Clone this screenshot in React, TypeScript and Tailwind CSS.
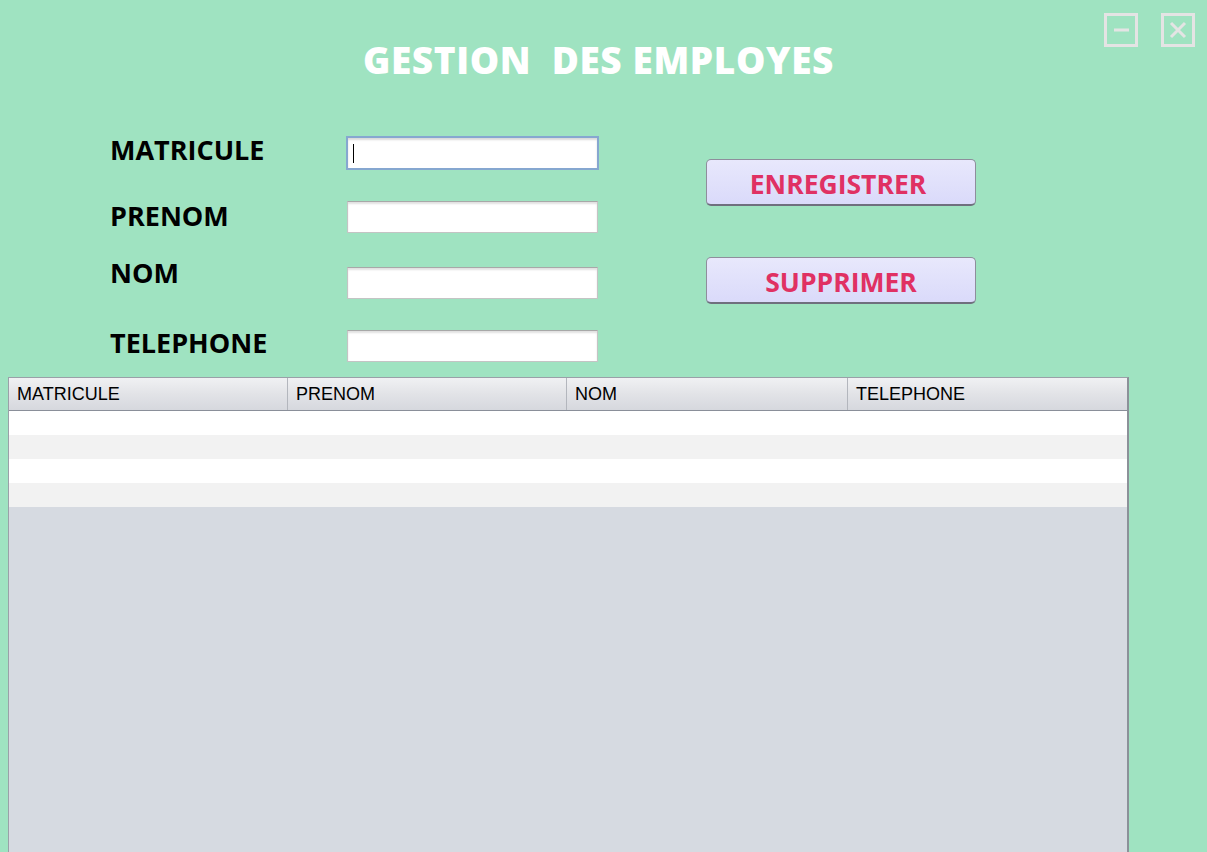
import React from "react";

const fields = ["MATRICULE", "PRENOM", "NOM", "TELEPHONE"];
const columns = [
  { label: "MATRICULE", width: "w-[279px]" },
  { label: "PRENOM", width: "w-[279px]" },
  { label: "NOM", width: "w-[281px]" },
  { label: "TELEPHONE", width: "flex-1" },
];

const WindowButton = ({ kind }: { kind: "min" | "close" }) => (
  <div className="w-[34px] h-[34px] border-[3px] border-[#e4e4e4] flex items-center justify-center">
    <svg width="18" height="18" viewBox="0 0 18 18">
      {kind === "min" ? (
        <line x1="2" y1="9" x2="17" y2="9" stroke="#e4e4e4" strokeWidth="3" />
      ) : (
        <path d="M2 2 L16 16 M16 2 L2 16" stroke="#e4e4e4" strokeWidth="3" />
      )}
    </svg>
  </div>
);

const TextBox = ({ focused, className }: { focused?: boolean; className?: string }) => (
  <div
    className={`w-[251px] h-[32px] bg-white flex items-center ${
      focused
        ? "border-2 border-[#86a7d0] shadow-[inset_0_2px_2px_rgba(0,0,0,0.15)]"
        : "border border-[#c4c4c4] border-t-[#a8a8a8] shadow-[inset_0_2px_2px_rgba(0,0,0,0.12)]"
    } ${className ?? ""}`}
  >
    {focused && <span className="ml-[5px] w-px h-[19px] bg-black" />}
  </div>
);

const ActionButton = ({ label, className }: { label: string; className?: string }) => (
  <button
    className={`w-[270px] h-[47px] rounded-[5px] border border-[#8e8e9c] border-b-2 border-b-[#6f6f7e] bg-gradient-to-b from-[#e8e8fc] to-[#dadafa] text-[#e03163] text-[26.5px] font-bold leading-none flex items-center justify-center pt-[4px] ${className ?? ""}`}
    style={{ fontFamily: '"Open Sans", sans-serif' }}
  >
    {label}
  </button>
);

export default function App() {
  return (
    <div
      className="relative w-[1207px] h-[852px] bg-[#9fe3c1] flex flex-col overflow-hidden"
      style={{ fontFamily: '"Open Sans", sans-serif' }}
    >
      {/* window controls */}
      <div className="absolute top-[13px] right-[12px] flex gap-[23px]">
        <WindowButton kind="min" />
        <WindowButton kind="close" />
      </div>

      {/* title */}
      <h1 className="mt-[42px] h-[36px] text-center text-white text-[37px] font-extrabold leading-[36px] tracking-[0.6px] whitespace-pre pr-[10px]">
        {"GESTION  DES EMPLOYES"}
      </h1>

      {/* form */}
      <div className="mt-[58px] flex pl-[110px]">
        <div className="w-[237px] flex flex-col text-black text-[27px] font-bold leading-[26px]">
          <span className="mt-[1px] h-[26px]">{fields[0]}</span>
          <span className="mt-[40px] h-[26px]">{fields[1]}</span>
          <span className="mt-[31px] h-[26px]">{fields[2]}</span>
          <span className="mt-[44px] h-[26px]">{fields[3]}</span>
        </div>
        <div className="flex flex-col">
          <TextBox focused className="w-[253px] h-[34px] -ml-[1px]" />
          <TextBox className="mt-[31px]" />
          <TextBox className="mt-[34px]" />
          <TextBox className="mt-[31px]" />
        </div>
        <div className="ml-[107px] flex flex-col">
          <ActionButton label="ENREGISTRER" className="mt-[23px] pr-[6px]" />
          <ActionButton label="SUPPRIMER" className="mt-[51px]" />
        </div>
      </div>

      {/* table */}
      <div className="mt-[15px] ml-[8px] w-[1121px] flex-1 flex flex-col border-l border-[#9aa0a8] border-r-2 border-r-[#8c9199] border-t border-t-[#9aa0a8]">
        <div className="h-[33px] flex bg-gradient-to-b from-[#f0f1f3] via-[#e2e3e7] to-[#d6d8de] border-b border-[#8a8f99]">
          {columns.map((col, i) => (
            <div
              key={col.label}
              className={`${col.width} flex items-center pl-[8px] text-[18px] text-black ${
                i < columns.length - 1 ? "border-r border-[#b3b6bd]" : ""
              }`}
              style={{ fontFamily: '"Liberation Sans", Arial, sans-serif' }}
            >
              {col.label}
            </div>
          ))}
        </div>
        <div className="h-[24px] bg-white" />
        <div className="h-[24px] bg-[#f2f2f2]" />
        <div className="h-[24px] bg-white" />
        <div className="h-[24px] bg-[#f2f2f2]" />
        <div className="flex-1 bg-[#d6dae1]" />
      </div>
    </div>
  );
}
